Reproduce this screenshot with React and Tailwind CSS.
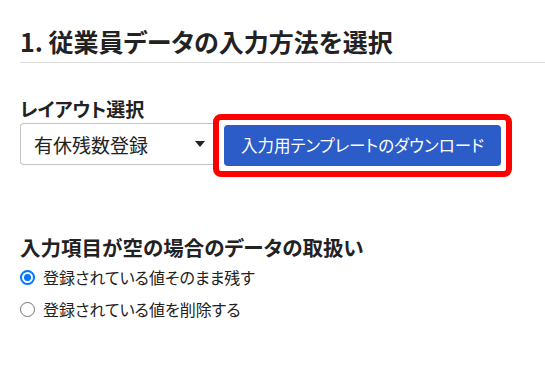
export default function App() {
  const font = "font-['Noto_Sans_CJK_JP','Noto_Sans',sans-serif] [font-feature-settings:'palt']";

  return (
    <div className={`min-h-[365px] w-[545px] bg-white pl-[20px] pt-[25px] text-[#222] ${font}`}>
      <h2 className="border-b border-[#dcdcdc] pb-[5px] text-[25px] font-bold leading-[32px]">
        1. 従業員データの入力方法を選択
      </h2>

      <div className="mt-[35px] text-[19px] font-bold leading-[22px]">レイアウト選択</div>
      <div className="mt-[3px] flex items-start">
        <div className="flex h-[42px] w-[193px] shrink-0 items-center justify-between rounded-l-[4px] border border-r-0 border-[#c4c4c4] pl-[13px] pr-[8px]">
          <span className="text-[19px] leading-none">有休残数登録</span>
          <svg width="10" height="6" viewBox="0 0 10 6">
            <path d="M0 0h10L5 6z" fill="#222" />
          </svg>
        </div>
        <div className="-mt-[9px] shrink-0 rounded-[8px] border-[6px] border-[#ff0000] p-[5px]">
          <button className="flex h-[41px] w-[277px] items-center justify-center rounded-[4px] bg-[#2b5cc8] text-[16.5px] leading-none text-white">
            入力用テンプレートのダウンロード
          </button>
        </div>
      </div>

      <div className="mt-[58px] text-[20.5px] font-bold leading-[24px]">入力項目が空の場合のデータの取扱い</div>
      <div className="mt-[6px] flex flex-col gap-[8px]">
        <label className="flex h-[24px] items-center gap-[8px] text-[16px]">
          <span className="flex h-[15px] w-[15px] items-center justify-center rounded-full border-[2px] border-[#0075ff]">
            <span className="h-[7px] w-[7px] rounded-full bg-[#0075ff]" />
          </span>
          登録されている値そのまま残す
        </label>
        <label className="flex h-[24px] items-center gap-[8px] text-[16px]">
          <span className="h-[15px] w-[15px] rounded-full border border-[#767676]" />
          登録されている値を削除する
        </label>
      </div>
    </div>
  );
}
